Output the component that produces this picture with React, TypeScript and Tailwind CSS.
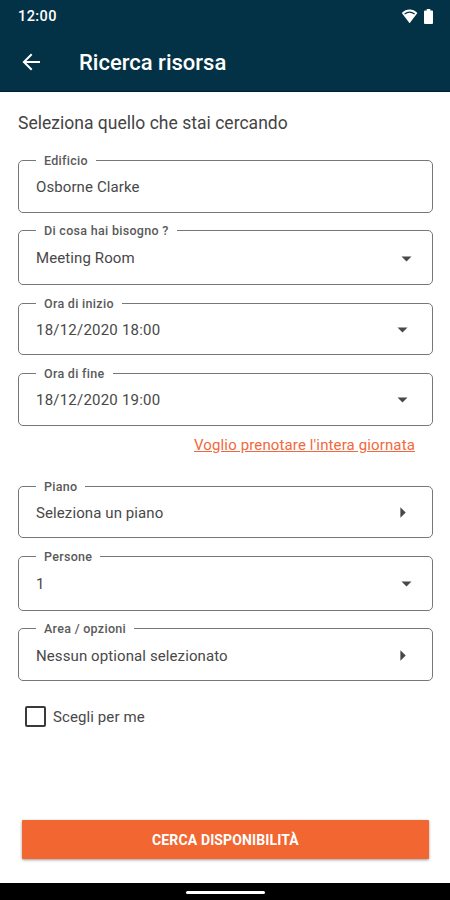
type Caret = "down" | "right";

interface FieldProps {
  label: string;
  value: string;
  caret?: Caret;
  className: string;
  rowClassName?: string;
  valueClassName?: string;
}

function CaretIcon({ direction }: { direction: Caret }) {
  return direction === "down" ? (
    <svg width="11" height="6" viewBox="0 0 11 6" fill="#484848" aria-hidden>
      <path d="M.5.4h10L5.500 5.600z" />
    </svg>
  ) : (
    <svg width="6" height="11" viewBox="0 0 6 11" fill="#484848" aria-hidden>
      <path d="M.4.3v10.400L5.700 5.500z" />
    </svg>
  );
}

function Field({
  label,
  value,
  caret,
  className,
  rowClassName = "h-[40px] pr-[24px]",
  valueClassName = "tracking-[0.1px]",
}: FieldProps) {
  return (
    <fieldset
      className={`w-full min-w-0 rounded-[5px] border border-[#73797b] ${className}`}
    >
      <legend className="ml-[17px] h-[13px] whitespace-nowrap px-[8px] text-[12.5px] font-medium leading-[13px] tracking-[0.3px] text-[#5a5a5a]">
        {label}
      </legend>
      <div className={`flex items-center justify-between pl-[17px] ${rowClassName}`}>
        <span
          className={`whitespace-nowrap text-[15px] leading-[22px] text-[#484848] ${
            caret === "right" ? "mt-px" : "-mt-px"
          } ${valueClassName}`}
        >
          {value}
        </span>
        {caret && <CaretIcon direction={caret} />}
      </div>
    </fieldset>
  );
}

function StatusBar() {
  return (
    <div className="flex h-8 items-center justify-between pl-[18px] pr-[17px] text-white">
      <span className="mt-[2px] text-[14.5px] font-medium tracking-[0.4px]">12:00</span>
      <div className="flex items-center gap-[6px]">
        <svg width="17" height="15" viewBox="0 0 17 15" aria-hidden>
          <path d="M.8 4C5.200-.6 12-.6 16.400 4L8.600 14.200z" fill="#fff" />
          <path
            d="M3.600 4.900C6.500 2.900 10.700 2.900 13.600 4.900"
            fill="none"
            stroke="#033247"
            strokeWidth="1.200"
          />
        </svg>
        <svg width="9" height="15" viewBox="0 0 9 15" fill="#fff" aria-hidden>
          <path d="M2.700 0h3.600v1.500h1.700q1 0 1 1V14q0 1-1 1H1q-1 0-1-1V2.500q0-1 1-1h1.700z" />
        </svg>
      </div>
    </div>
  );
}

export default function App() {
  return (
    <div className="flex h-[900px] w-[450px] flex-col overflow-hidden bg-white font-[Roboto,'Liberation_Sans',sans-serif]">
      <header className="h-[92px] shrink-0 border-b border-[#041b35] bg-[#033247]">
        <StatusBar />
        <div className="flex h-[60px] items-center pl-[22px]">
          <button type="button" aria-label="Indietro">
            <svg
              width="19"
              height="18"
              viewBox="0 0 19 18"
              fill="none"
              stroke="#fff"
              strokeWidth="2"
              aria-hidden
            >
              <path d="M18 9H2M9.700 1.200L1.900 9l7.800 7.800" />
            </svg>
          </button>
          <h1 className="ml-[38px] whitespace-nowrap text-[22px] font-medium text-white">
            Ricerca risorsa
          </h1>
        </div>
      </header>

      <main className="flex flex-1 flex-col pl-[18px] pr-[17px]">
        <p className="mt-[18px] h-[26px] whitespace-nowrap text-[17.5px] leading-[26px] tracking-[0.02px] text-[#444]">
          Seleziona quello che stai cercando
        </p>

        <div className="mt-[18px] flex flex-col">
          <Field label="Edificio" value="Osborne Clarke" className="h-[59px]" />
          <Field
            label="Di cosa hai bisogno ?"
            value="Meeting Room"
            caret="down"
            className="mt-[11px] h-[61px]"
            rowClassName="h-[43px] pr-[20px]"
          />
          <Field
            label="Ora di inizio"
            value="18/12/2020 18:00"
            caret="down"
            className="mt-3 h-[58px]"
            valueClassName="tracking-[0.22px]"
          />
          <Field
            label="Ora di fine"
            value="18/12/2020 19:00"
            caret="down"
            className="mt-3 h-[59px]"
            valueClassName="tracking-[0.22px]"
          />
        </div>

        <a
          href="#"
          className="mr-[18px] mt-[9px] h-[20px] self-end whitespace-nowrap text-[15px] leading-[20px] tracking-[0.13px] text-[#f2683c] underline"
        >
          Voglio prenotare l'intera giornata
        </a>

        <div className="mt-[25px] flex flex-col">
          <Field
            label="Piano"
            value="Seleziona un piano"
            caret="right"
            className="h-[58px]"
            rowClassName="h-[39px] pr-[26px]"
          />
          <Field
            label="Persone"
            value="1"
            caret="down"
            className="mt-3 h-[61px]"
            rowClassName="h-[42px] pr-[20px]"
          />
          <Field
            label="Area / opzioni"
            value="Nessun optional selezionato"
            caret="right"
            className="mt-[11px] h-[59px]"
            rowClassName="h-[41px] pr-[26px]"
          />
        </div>

        <label className="ml-[7px] mt-[25px] flex h-[21px] items-center gap-[7px]">
          <input
            type="checkbox"
            className="size-[21px] appearance-none rounded-[2px] border-2 border-[#3a3a3a]"
          />
          <span className="mt-px whitespace-nowrap text-[15px] leading-[22px] tracking-[0.1px] text-[#484848]">
            Scegli per me
          </span>
        </label>

        <button
          type="button"
          className="mx-[4px] mb-[24px] mt-auto h-[39px] rounded-[1px] bg-[#f26631] pt-px text-[14px] font-bold tracking-[0.13px] text-white shadow-[0_1px_3px_rgba(0,0,0,0.4)]"
        >
          CERCA DISPONIBILITÀ
        </button>
      </main>

      <footer className="flex h-[17px] shrink-0 justify-center bg-black pt-[8px]">
        <div className="h-[3px] w-[79px] rounded-full bg-white" />
      </footer>
    </div>
  );
}
